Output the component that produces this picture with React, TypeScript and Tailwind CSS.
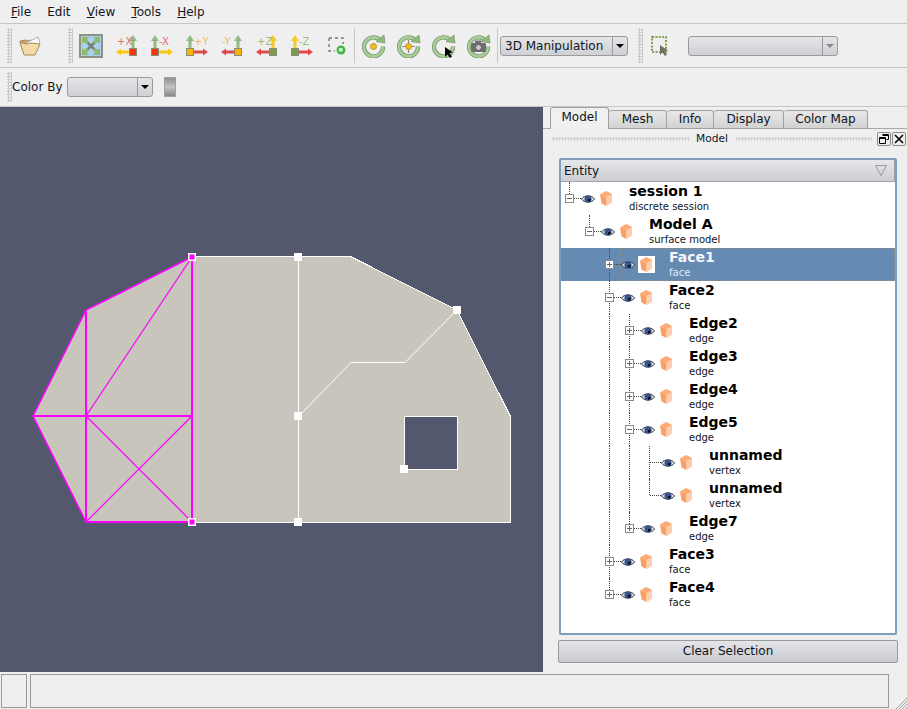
import React from "react";

type Row = {
  depth: number;
  title: string;
  sub: string;
  exp?: "+" | "-";
  through: number[];
  half?: number;
  selected?: boolean;
};

const rows: Row[] = [
  { depth: 0, title: "session 1", sub: "discrete session", exp: "-", through: [], half: 0 },
  { depth: 1, title: "Model A", sub: "surface model", exp: "-", through: [], half: 1 },
  { depth: 2, title: "Face1", sub: "face", exp: "+", through: [2], selected: true },
  { depth: 2, title: "Face2", sub: "face", exp: "-", through: [2] },
  { depth: 3, title: "Edge2", sub: "edge", exp: "+", through: [2, 3] },
  { depth: 3, title: "Edge3", sub: "edge", exp: "+", through: [2, 3] },
  { depth: 3, title: "Edge4", sub: "edge", exp: "+", through: [2, 3] },
  { depth: 3, title: "Edge5", sub: "edge", exp: "-", through: [2, 3] },
  { depth: 4, title: "unnamed", sub: "vertex", through: [2, 3, 4] },
  { depth: 4, title: "unnamed", sub: "vertex", through: [2, 3], half: 4 },
  { depth: 3, title: "Edge7", sub: "edge", exp: "+", through: [2], half: 3 },
  { depth: 2, title: "Face3", sub: "face", exp: "+", through: [2] },
  { depth: 2, title: "Face4", sub: "face", exp: "+", through: [], half: 2 },
];

const gripV = "bg-[radial-gradient(#c9c9c9_1px,transparent_1.2px)] bg-[length:3px_3px]";

function Grip({ className }: { className: string }) {
  return <div className={`w-[5px] shrink-0 ${gripV} ${className}`} />;
}

function ToolBtn({ w, children }: { w: string; children: React.ReactNode }) {
  return <div className={`${w} h-[26px] shrink-0 flex items-center justify-center`}>{children}</div>;
}

function Combo({ w, text, disabled }: { w: string; text?: string; disabled?: boolean }) {
  return (
    <div className={`${w} h-[20px] shrink-0 flex rounded-[3px] border border-[#9a9a9a] bg-gradient-to-b from-[#e4e5e8] to-[#cfd0d4] text-[12px] text-[#10141c]`}>
      <div className="flex-1 pl-[4px] leading-[18px] whitespace-nowrap overflow-hidden">{text}</div>
      <div className="w-[15px] border-l border-[#9a9a9a] flex items-center justify-center">
        <div className={`w-0 h-0 border-x-[4px] border-x-transparent border-t-[4px] ${disabled ? "border-t-[#8a8a8a]" : "border-t-black"}`} />
      </div>
    </div>
  );
}

function FolderIcon() {
  return (
    <svg width="22" height="22" viewBox="0 0 22 22">
      <path d="M1 6l6-1 2 1 3-1 1 14H5z" fill="#c9a86c" stroke="#a58a5c" />
      <path d="M7 8l12-6 2 6-8 6z" fill="#fbfbfb" stroke="#b0b0b0" />
      <path d="M1 7.5l7 1.5 4-1 9 1-5 11H5z" fill="#f5dca6" stroke="#a58a5c" strokeLinejoin="round" />
    </svg>
  );
}

function ResetIcon() {
  return (
    <svg width="24" height="24" viewBox="0 0 24 24">
      <rect x="1" y="1" width="22" height="22" fill="#a9d0f2" stroke="#8d9283" strokeWidth="2" />
      <path d="M6 6l12 12M18 6L6 18" stroke="#7b7f73" strokeWidth="2.5" />
      <path d="M3 3h7l-2 2 2 3-2 2-3-2-2 2zM21 3v7l-2-2-3 2-2-2 2-3-2-2zM3 21v-7l2 2 3-2 2 2-2 3 2 2zM21 21h-7l2-2-2-3 2-2 3 2 2-2z" fill="#8fb86b" />
    </svg>
  );
}

function AxisIcon({ label, labelColor, square, h, v, left }: { label: string; labelColor: string; square: string; h: string; v: string; left?: boolean }) {
  // left: the square sits on the right and the flat arrow points left
  const sx = left ? 13 : 0;
  const hPath = left ? "M13 17H4" : "M8 17h10";
  const hHead = left ? "M5 13.5v7L0 17z" : "M17 13.5v7l5-3.5z";
  return (
    <svg width="22" height="22" viewBox="0 0 22 22">
      <path d={`M${sx + 4} 13V5`} stroke={v} strokeWidth="3" opacity="0.8" />
      <path d={`M${sx} 6l4-6 4 6z`} fill={v} opacity="0.8" />
      <path d={hPath} stroke={h} strokeWidth="3" opacity="0.9" />
      <path d={hHead} fill={h} opacity="0.9" />
      <rect x={sx + 0.5} y="13.5" width="7" height="7" fill={square} stroke="#8a8a78" strokeWidth="1" />
      <text x={left ? 1 : 8} y="9.5" fontSize="10" fontFamily="DejaVu Sans" fill={labelColor} opacity="0.8">{label}</text>
    </svg>
  );
}

function ZoomBoxIcon() {
  return (
    <svg width="18" height="18" viewBox="0 0 18 18">
      <path d="M1 1h14v6M1 1v13h6" fill="none" stroke="#777" strokeWidth="1.4" strokeDasharray="3 3" />
      <circle cx="13" cy="13" r="4.5" fill="#47b54a" />
      <circle cx="12.8" cy="12.8" r="2" fill="#d6f2d4" />
    </svg>
  );
}

function RotateIcon({ kind }: { kind: "dot" | "cross" | "cursor" | "camera" }) {
  const arc = "M19 7A9.5 9.5 0 1 0 21 12.5";
  return (
    <svg width="24" height="24" viewBox="0 0 24 24">
      <path d={arc} fill="none" stroke="#7d9472" strokeWidth="4.2" />
      <path d={arc} fill="none" stroke="#a6d196" strokeWidth="2.6" />
      <path d="M14 7.5L23 9 22 1z" fill="#8cbd78" stroke="#7d9472" strokeWidth="0.7" />
      {kind === "dot" && <circle cx="11.5" cy="12.5" r="3" fill="#f5bd16" stroke="#b69a3c" />}
      {kind === "cross" && (
        <>
          <path d="M11.5 6v13M5 12.5h13" stroke="#8c8c70" strokeWidth="1.2" />
          <circle cx="11.5" cy="12.5" r="3" fill="#f5bd16" stroke="#b69a3c" />
        </>
      )}
      {kind === "cursor" && <path d="M13 13l0 10 2.5-2.5 2.5 3.5 2-1.5-2.5-3.5 3.5-.5z" fill="#000" />}
      {kind === "camera" && (
        <>
          <rect x="4" y="9" width="15" height="9" rx="1" fill="#6f6f6f" />
          <rect x="8" y="6.5" width="6" height="3" fill="#6f6f6f" />
          <circle cx="11.5" cy="13.5" r="3" fill="#c9c9c9" stroke="#555" />
        </>
      )}
    </svg>
  );
}

function SelectIcon() {
  return (
    <svg width="22" height="24" viewBox="0 0 22 24">
      <rect x="2" y="3" width="14" height="15" fill="none" stroke="#7f9f4f" strokeWidth="2" strokeDasharray="2 1.4" />
      <path d="M10 11l0 10 2.5-2.5 2.5 3.5 2-1.5-2.5-3.5 3.5-.5z" fill="#6f6f60" />
    </svg>
  );
}

function Eye() {
  return (
    <svg width="14" height="10" viewBox="0 0 14 10" className="shrink-0">
      <path d="M0.5 5C3 .8 11 .8 13.5 5 11 9.2 3 9.2 0.5 5z" fill="#dfe4ea" stroke="#343b46" />
      <circle cx="7" cy="5" r="3.6" fill="#38538c" />
      <path d="M7 5h2.8A2.8 2.8 0 0 1 7 7.8z" fill="#0a0f1a" />
    </svg>
  );
}

function Cube() {
  return (
    <svg width="12" height="15" viewBox="0 0 12 15" className="shrink-0">
      <path d="M6 0l6 3v8.5l-5 3.5z" fill="#ffcdae" />
      <path d="M0 3.5L6 0l6 3-5.5 3z" fill="#fdaa76" />
      <path d="M0 3.5l6.5 2.5V15L1.5 12.5z" fill="#fc9f62" />
    </svg>
  );
}

function Scene() {
  const handles = [[298, 257], [298, 416], [298, 522], [457, 310], [404, 469]];
  return (
    <svg width="543" height="565" viewBox="0 107 543 565" className="block">
      <path
        fillRule="evenodd"
        fill="#c8c5bc"
        d="M192 256.5H350.5L457 310 510.5 416.5V522.5H86L33 416 86 310zM404.5 416.5V469.5H457.5V416.5z"
      />
      <g fill="none" stroke="#fff" strokeWidth="1" shapeRendering="crispEdges">
        <path d="M192 256.5H350.5L457 310 510.5 416.5V522.5H192" />
        <path d="M404.5 416.5H457.5V469.5H404.5z" />
        <path d="M298.5 257V522" />
      </g>
      <path d="M298.5 416.5L351 362.5H405L457 310" fill="none" stroke="#fff" strokeWidth="1" />
      <path d="M192 257L86 310 33 416 86 522" fill="none" stroke="#ff00ff" strokeWidth="1.6" />
      <path d="M86 522H192V257M86 310V522M33 416H192" fill="none" stroke="#ff00ff" strokeWidth="2" shapeRendering="crispEdges" />
      <line x1="86" y1="416" x2="192" y2="257" stroke="#ff00ff" strokeWidth="1.2" />
      <line x1="86" y1="416" x2="192" y2="522" stroke="#ff00ff" strokeWidth="1.2" />
      <line x1="86" y1="522" x2="192" y2="416" stroke="#ff00ff" strokeWidth="1.2" />
      {handles.map(([x, y]) => (
        <rect key={`${x}-${y}`} x={x - 4} y={y - 4} width="8" height="8" fill="#fff" />
      ))}
      {[257, 522].map((y) => (
        <g key={y}>
          <rect x="188" y={y - 4} width="8" height="8" fill="#fff" />
          <rect x="189.5" y={y - 2.5} width="5" height="5" fill="#ff00ff" />
        </g>
      ))}
    </svg>
  );
}

function TreeRow({ row }: { row: Row }) {
  const guide = (d: number) => 8 + 20 * d;
  return (
    <div className={`relative h-[33px] flex items-center ${row.selected ? "bg-[#668bb2]" : ""}`} style={{ paddingLeft: 4 + 20 * row.depth }}>
      {row.through.map((d) => (
        <div key={d} className="absolute top-0 bottom-0 border-l border-dotted border-[#444]" style={{ left: guide(d) }} />
      ))}
      {row.half !== undefined && (
        <div className="absolute top-0 h-[16px] border-l border-dotted border-[#444]" style={{ left: guide(row.half) }} />
      )}
      {row.selected && (
        <div className="absolute left-[59px] right-0 top-0 bottom-0 border border-dashed border-[#b5895a]/50" />
      )}
      {row.exp ? (
        <div className="relative w-[9px] h-[9px] shrink-0 border border-[#8a8a8a] bg-white">
          <div className="absolute left-[1px] right-[1px] top-[3px] h-px bg-[#666]" />
          {row.exp === "+" && <div className="absolute top-[1px] bottom-[1px] left-[3px] w-px bg-[#666]" />}
        </div>
      ) : (
        <div className="w-[9px] shrink-0" />
      )}
      <div className={`${row.exp ? "w-[7px]" : "w-[11px] -ml-[4px]"} relative border-t border-dotted border-[#444] shrink-0`} />
      <div className="relative flex"><Eye /></div>
      <div className="relative ml-[5px] shrink-0 flex items-center justify-center w-[12px] h-[17px]">
        {row.selected && <div className="absolute -left-[2px] -right-[3px] top-0 bottom-0 bg-white" />}
        <div className="relative flex"><Cube /></div>
      </div>
      <div className="relative ml-[17px] -mt-[1px]">
        <div className={`text-[14px] font-bold leading-[17px] ${row.selected ? "text-[#f2f6fb]" : "text-black"}`}>{row.title}</div>
        <div className={`text-[10px] leading-[13px] ${row.selected ? "text-[#e3e9f1]" : "text-[#10141c]"}`}>{row.sub}</div>
      </div>
    </div>
  );
}

const tabs = [
  { label: "Model", w: "w-[59px]", active: true },
  { label: "Mesh", w: "w-[58px]" },
  { label: "Info", w: "w-[47px]" },
  { label: "Display", w: "w-[70px]" },
  { label: "Color Map", w: "w-[84px]" },
];

export default function App() {
  return (
    <div className="w-[907px] h-[709px] overflow-hidden bg-[#efefef] text-[12px] text-[#10141c] font-['DejaVu_Sans',sans-serif]">
      <div className="h-[24px] border-b border-[#c6c6c6] flex items-center pl-[11px] gap-[16.2px] text-[12px]">
        <span><u>F</u>ile</span>
        <span>Edit</span>
        <span><u>V</u>iew</span>
        <span><u>T</u>ools</span>
        <span><u>H</u>elp</span>
      </div>

      <div className="h-[44px] border-b border-[#c6c6c6] flex items-center pl-[7px]">
        <Grip className="h-[35px]" />
        <ToolBtn w="w-[36px]"><FolderIcon /></ToolBtn>
        <Grip className="h-[35px] ml-[20px]" />
        <ToolBtn w="w-[36px]"><ResetIcon /></ToolBtn>
        <ToolBtn w="w-[35px]"><AxisIcon label="+X" labelColor="#e05050" square="#ef3a10" h="#f7c400" v="#7faf6a" left /></ToolBtn>
        <ToolBtn w="w-[35px]"><AxisIcon label="-X" labelColor="#e05050" square="#ef3a10" h="#f7c400" v="#7faf6a" /></ToolBtn>
        <ToolBtn w="w-[35px]"><AxisIcon label="+Y" labelColor="#f0b040" square="#f7b500" h="#dd3a3a" v="#7faf6a" /></ToolBtn>
        <ToolBtn w="w-[35px]"><AxisIcon label="-Y" labelColor="#f0b040" square="#f7b500" h="#dd3a3a" v="#7faf6a" left /></ToolBtn>
        <ToolBtn w="w-[35px]"><AxisIcon label="+Z" labelColor="#86b06a" square="#7c9c4c" h="#dd3a3a" v="#f7c400" left /></ToolBtn>
        <ToolBtn w="w-[35px]"><AxisIcon label="-Z" labelColor="#86b06a" square="#7c9c4c" h="#dd3a3a" v="#f7c400" /></ToolBtn>
        <ToolBtn w="w-[35px]"><ZoomBoxIcon /></ToolBtn>
        <div className="w-px h-[35px] mr-px bg-[#c6c6c6] shrink-0" />
        <ToolBtn w="w-[35px]"><RotateIcon kind="dot" /></ToolBtn>
        <ToolBtn w="w-[35px]"><RotateIcon kind="cross" /></ToolBtn>
        <ToolBtn w="w-[35px]"><RotateIcon kind="cursor" /></ToolBtn>
        <ToolBtn w="w-[35px]"><RotateIcon kind="camera" /></ToolBtn>
        <div className="w-px h-[35px] ml-[1px] bg-[#c6c6c6] shrink-0" />
        <div className="ml-[2px]"><Combo w="w-[128px]" text="3D Manipulation" /></div>
        <Grip className="h-[35px] ml-[10px]" />
        <ToolBtn w="w-[36px]"><SelectIcon /></ToolBtn>
        <div className="ml-[9px]"><Combo w="w-[150px]" disabled /></div>
      </div>

      <div className="h-[39px] border-b border-[#c6c6c6] flex items-center pl-[7px]">
        <Grip className="h-[30px]" />
        <span>Color By</span>
        <div className="ml-[5px]"><Combo w="w-[86px]" /></div>
        <div className="ml-[11px] w-[12px] h-[20px] border border-[#a0a0a0] bg-gradient-to-b from-[#8f8f8f] via-[#c4c4c4] to-[#8a8a8a]" />
      </div>

      <div className="h-[565px] flex">
        <div className="w-[543px] bg-[#53586e]">
          <Scene />
        </div>
        <div className="w-[364px]">
          <div className="h-[22px] border-b border-[#a8a8a8] flex items-end pl-[7px]">
            {tabs.map((t) => (
              <div
                key={t.label}
                className={`${t.w} shrink-0 text-center rounded-t-[3px] border border-[#a0a0a0] -mb-px ${
                  t.active
                    ? "h-[22px] leading-[19px] bg-[#f0f0f0] border-b-0"
                    : "h-[19px] leading-[17px] bg-gradient-to-b from-[#e8e8e8] to-[#d2d2d2] border-l-0"
                }`}
              >
                {t.label}
              </div>
            ))}
          </div>

          <div className="h-[20px] flex items-center pl-[9px] text-[10.67px]">
            <div className="w-[137px] h-[4px] bg-[radial-gradient(#cfcfcf_1px,transparent_1.2px)] bg-[length:3px_3px]" />
            <span className="w-[46px] text-center">Model</span>
            <div className="w-[137px] h-[4px] bg-[radial-gradient(#cfcfcf_1px,transparent_1.2px)] bg-[length:3px_3px]" />
            <div className="ml-[5px] w-[14px] h-[14px] rounded-[2px] border border-[#8a8a8a] flex items-center justify-center">
              <svg width="10" height="10" viewBox="0 0 10 10">
                <path d="M3.5 .5h6v5h-2M.5 3.5h6v6h-6zM3.5 1.5h6M.5 4.5h6" fill="none" stroke="#000" />
              </svg>
            </div>
            <div className="ml-px w-[14px] h-[14px] rounded-[2px] border border-[#8a8a8a] flex items-center justify-center">
              <svg width="10" height="10" viewBox="0 0 10 10">
                <path d="M1 1l8 8M9 1L1 9" stroke="#000" strokeWidth="1.6" />
              </svg>
            </div>
          </div>

          <div className="ml-[16px] mt-[9px] w-[338px] h-[477px] border-2 border-[#7f9dbc] rounded-[2px] bg-white overflow-hidden">
            <div className="h-[22px] flex items-center justify-between pl-[3px] pr-[7px] border-b border-r border-[#a4a4a4] bg-gradient-to-b from-[#e6e7ea] to-[#cbcdd2]">
              <span>Entity</span>
              <svg width="12" height="11" viewBox="0 0 12 11">
                <path d="M.5 .5h11L6 10.5z" fill="none" stroke="#9a9a9a" />
              </svg>
            </div>
            {rows.map((row, i) => (
              <TreeRow key={i} row={row} />
            ))}
          </div>

          <div className="ml-[15px] mt-[5px] w-[340px] h-[23px] rounded-[2px] border border-[#9a9a9a] bg-gradient-to-b from-[#e4e5e8] to-[#cacbd0] text-center leading-[21px]">
            Clear Selection
          </div>
        </div>
      </div>

      <div className="relative h-[37px] flex items-center pl-[1px] gap-[3px]">
        <div className="w-[26px] h-[34px] border border-[#9a9a9a]" />
        <div className="w-[859px] h-[34px] border border-[#9a9a9a]" />
        <svg width="12" height="12" viewBox="0 0 12 12" className="absolute right-0 bottom-0">
          <path d="M12 1L1 12M12 4L4 12M12 7L7 12M12 10L10 12" stroke="#a5a5a5" />
        </svg>
      </div>
    </div>
  );
}
